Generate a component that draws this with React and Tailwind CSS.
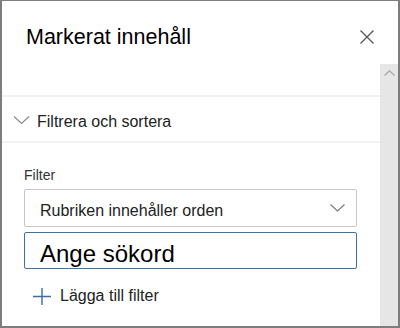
import React from "react";

export default function App() {
  const font = { fontFamily: '"Liberation Sans", Arial, sans-serif' };
  return (
    <div
      className="w-[400px] h-[328px] bg-white border-t border-l-2 border-r-2 border-b-2 border-[#7d7d7d] flex flex-col overflow-hidden"
      style={font}
    >
      {/* Header */}
      <div className="h-[63px] shrink-0 flex items-start justify-between pl-[24px] pr-[24px] pt-[23px]">
        <span className="text-[21.5px] leading-[26px] text-black">Markerat innehåll</span>
        <svg width="14" height="14" viewBox="0 0 14 14" className="mt-[6px]">
          <path d="M0.5 0.5 L13.5 13.5 M13.5 0.5 L0.5 13.5" stroke="#555" strokeWidth="1.3" fill="none" />
        </svg>
      </div>

      {/* Body */}
      <div className="flex flex-1 min-h-0">
        <div className="flex-1 flex flex-col">
          <div className="h-[31px] shrink-0" />
          <div className="h-[2px] bg-[#f0f0f0] shrink-0" />
          <div className="flex items-start pt-[15px] pb-[9px] pl-[11px]">
            <svg width="17" height="10" viewBox="0 0 17 10" className="mt-[3px] shrink-0">
              <path d="M1 1.5 L8.5 8.5 L16 1.5" stroke="#8a8a8a" strokeWidth="1.2" fill="none" />
            </svg>
            <span className="ml-[7px] text-[16px] leading-[20px] text-[#222]">Filtrera och sortera</span>
          </div>
          <div className="h-[2px] bg-[#f3f3f3] shrink-0" />

          <div className="flex flex-col pl-[22px] pr-[23px]">
            <span className="mt-[22px] text-[14px] leading-[20px] text-[#333]">Filter</span>
            <div className="mt-[4px] h-[38px] border border-[#c6c6c6] rounded-[2px] flex items-center justify-between pl-[15px] pr-[11px]">
              <span className="pt-[6px] text-[16px] text-[#222]">Rubriken innehåller orden</span>
              <svg width="15" height="8" viewBox="0 0 15 8" className="shrink-0">
                <path d="M0.5 0.5 L7.5 7 L14.5 0.5" stroke="#777" strokeWidth="1.1" fill="none" />
              </svg>
            </div>
            <div className="mt-[5px] h-[37px] border border-[#3a73b0] rounded-[2px] flex items-center pl-[15px]">
              <span className="pt-[6px] text-[24px] text-black">Ange sökord</span>
            </div>
            <div className="mt-[17px] h-[20px] flex items-center pl-[9px]">
              <svg width="18" height="17" viewBox="0 0 18 17" className="shrink-0">
                <path d="M0 8.5 L18 8.5 M9 0 L9 17" stroke="#3d6da5" strokeWidth="1.4" fill="none" />
              </svg>
              <span className="ml-[9px] text-[16px] leading-[20px] text-[#222]">Lägga till filter</span>
            </div>
          </div>
        </div>

        {/* Scrollbar */}
        <div className="w-[18px] shrink-0 bg-[#e6e6e6] flex flex-col items-center">
          <svg width="11" height="6" viewBox="0 0 11 6" className="mt-[6px]">
            <path d="M0.5 5.5 L5.5 0.8 L10.5 5.5" stroke="#a3a3a3" strokeWidth="1.1" fill="none" />
          </svg>
        </div>
      </div>
    </div>
  );
}
